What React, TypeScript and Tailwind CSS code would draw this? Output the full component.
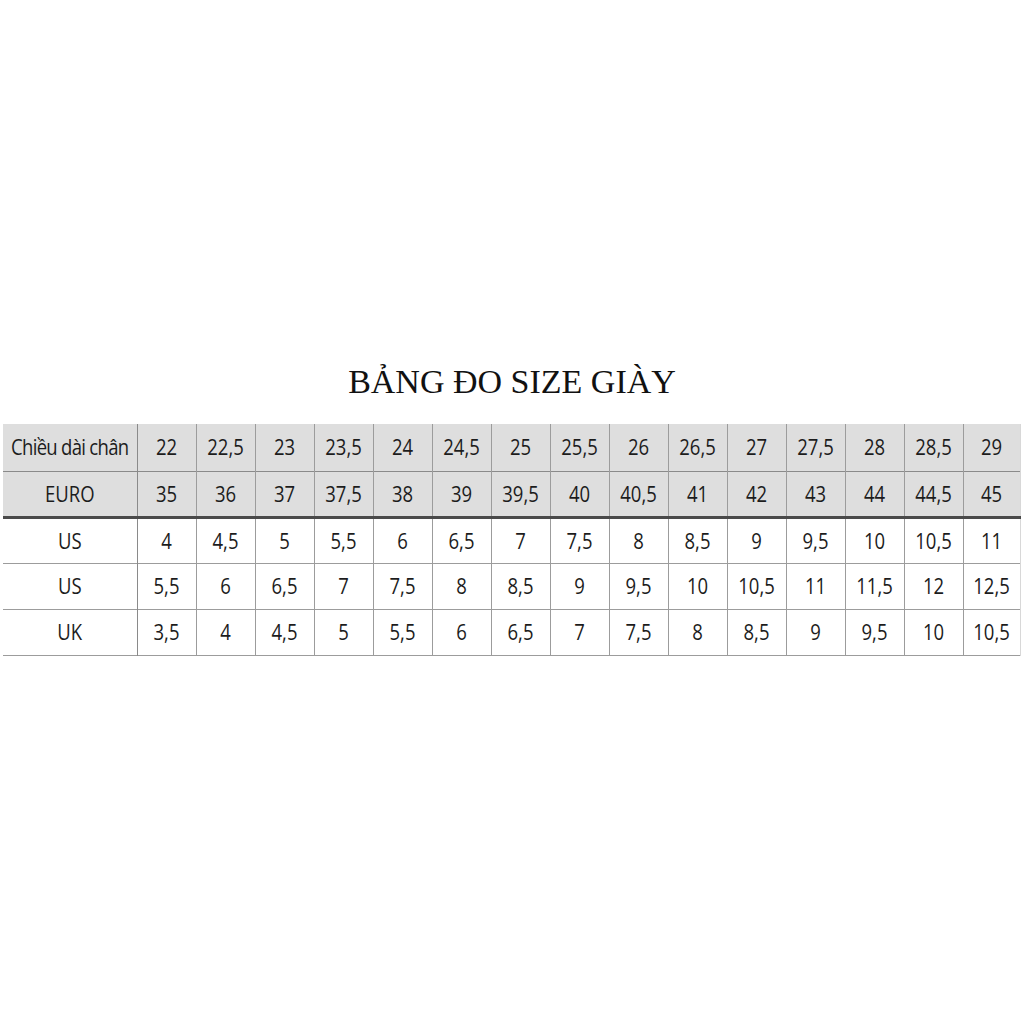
import React from "react";

const header1 = ["22", "22,5", "23", "23,5", "24", "24,5", "25", "25,5", "26", "26,5", "27", "27,5", "28", "28,5", "29"];
const header2 = ["35", "36", "37", "37,5", "38", "39", "39,5", "40", "40,5", "41", "42", "43", "44", "44,5", "45"];
const rows: [string, string[]][] = [
  ["US", ["4", "4,5", "5", "5,5", "6", "6,5", "7", "7,5", "8", "8,5", "9", "9,5", "10", "10,5", "11"]],
  ["US", ["5,5", "6", "6,5", "7", "7,5", "8", "8,5", "9", "9,5", "10", "10,5", "11", "11,5", "12", "12,5"]],
  ["UK", ["3,5", "4", "4,5", "5", "5,5", "6", "6,5", "7", "7,5", "8", "8,5", "9", "9,5", "10", "10,5"]],
];

function Cell({ children, last }: { children: React.ReactNode; last?: boolean }) {
  return (
    <td
      className={
        "p-0 text-center align-middle border-r border-[#9c9c9c] " + (last ? "border-r-[#d8d8d8]" : "")
      }
    >
      <span className="inline-block scale-y-[1.15]">{children}</span>
    </td>
  );
}

export default function App() {
  return (
    <div className="w-[1024px] h-[1024px] bg-white flex flex-col items-center pt-[362px]">
      <h1
        className="text-[34px] leading-[40px] text-[#111] tracking-[0px]"
        style={{ fontFamily: '"Liberation Serif", serif' }}
      >
        BẢNG ĐO SIZE GIÀY
      </h1>
      <div className="self-start ml-[3px] mt-[22px]">
        <table
          className="border-collapse text-[18.5px] font-medium text-[#1c1c1c] table-fixed w-[1017px]"
          style={{ fontFamily: '"Open Sans", sans-serif' }}
        >
          <colgroup>
            <col className="w-[134px]" />
            {header1.map((_, i) => (
              <col key={i} className={i === 14 ? "w-[57px]" : "w-[59px]"} />
            ))}
          </colgroup>
          <tbody>
            <tr className="h-[47px] bg-[#dedede] border-b border-[#8a8a8a]">
              <td className="p-0 text-center align-middle border-r border-[#8a8a8a] whitespace-nowrap tracking-[-0.7px]">
                <span className="inline-block scale-y-[1.15]">Chiều dài chân</span>
              </td>
              {header1.map((v, i) => (
                <Cell key={i} last={i === 14}>
                  {v}
                </Cell>
              ))}
            </tr>
            <tr className="h-[46px] bg-[#dedede] border-b-[3px] border-[#4a4a4a]">
              <td className="p-0 text-center align-middle border-r border-[#8a8a8a]">
                <span className="inline-block scale-y-[1.15]">EURO</span>
              </td>
              {header2.map((v, i) => (
                <Cell key={i} last={i === 14}>
                  {v}
                </Cell>
              ))}
            </tr>
            {rows.map(([label, vals], r) => (
              <tr key={r} className="h-[46px] bg-white border-b border-[#9c9c9c]">
                <td className="p-0 text-center align-middle border-r border-[#8a8a8a]">
                  <span className="inline-block scale-y-[1.15]">{label}</span>
                </td>
                {vals.map((v, i) => (
                  <Cell key={i} last={i === 14}>
                    {v}
                  </Cell>
                ))}
              </tr>
            ))}
          </tbody>
        </table>
      </div>
    </div>
  );
}
